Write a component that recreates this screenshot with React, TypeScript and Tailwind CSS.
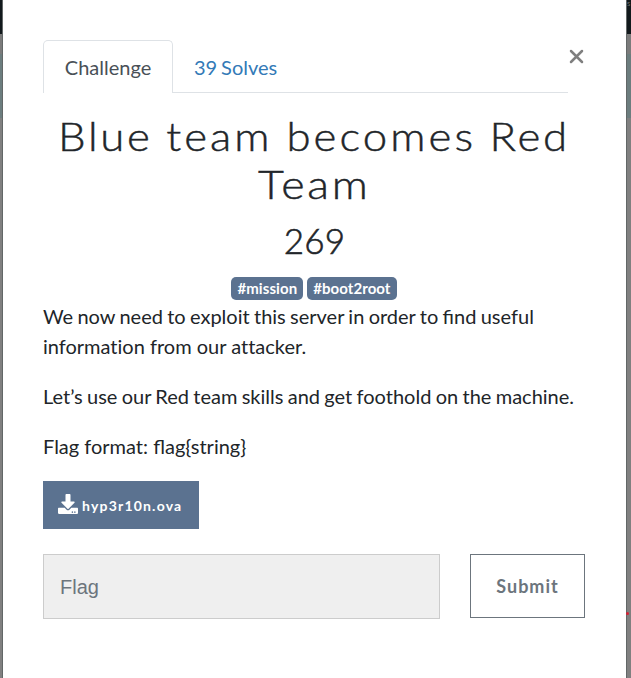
import React from "react";
import { FaDownload } from "react-icons/fa";

function Backdrop({ side }: { side: "left" | "right" }) {
  const right = side === "right";
  return (
    <div
      className={
        right
          ? "flex w-[5px] shrink-0 flex-col border-l border-[#626767]"
          : "flex w-[3px] shrink-0 flex-col border-r border-[#626767]"
      }
    >
      <div className="h-[34px] shrink-0 bg-[#12191c] text-[6px] leading-[7px] text-[#777777]">
        {right ? "S" : null}
      </div>
      <div className="h-5 shrink-0 bg-[#7b7b7b]" />
      <div className="h-16 shrink-0 bg-[#6c7d7e]" />
      <div className="flex-1 bg-[#808080]">
        {right && <div className="-ml-px mt-[494px] h-[3px] w-[3px] rounded-full bg-[#d91e34]" />}
      </div>
    </div>
  );
}

function Tag({ children }: { children: React.ReactNode }) {
  return (
    <span className="flex h-[23px] items-center rounded-[5px] bg-[#5b7290] px-1.5 text-[15px] font-bold leading-none tracking-[0.07px] text-white">
      {children}
    </span>
  );
}

export default function App() {
  return (
    <div className="flex h-[678px] w-[631px] overflow-hidden bg-white font-['Lato',sans-serif] text-[20px] leading-[30px] text-[#212529]">
      <Backdrop side="left" />
      <main className="flex w-[623px] shrink-0 flex-col pl-10 pr-[41px] pt-10">
        <header className="flex h-[53px]">
          <nav className="flex w-[525px] border-b border-[#dee2e6]">
            <button className="h-[53px] w-[130px] shrink-0 rounded-t-[5px] border border-b-0 border-[#dee2e6] bg-white text-[#495057]">
              Challenge
            </button>
            <button className="h-[53px] shrink-0 pl-[21px] text-[#337ab7] [word-spacing:-1.2px]">39 Solves</button>
          </nav>
          <button aria-label="Close" className="flex h-[33px] w-[17px] items-center justify-center">
            <svg width="15" height="15" viewBox="0 0 15 15" fill="none" stroke="#7f7f7f" strokeWidth="2.5" strokeLinecap="round">
              <path d="M2 2 13 13M13 2 2 13" />
            </svg>
          </button>
        </header>
        <h1 className="mt-[19px] flex flex-col items-center whitespace-nowrap text-[40px] font-light leading-[48px] [-webkit-text-stroke:0.45px_#212529]">
          <span className="scale-x-[1.094] tracking-[2.5px] [word-spacing:-1px]">
            Blue <span className="tracking-[2.8px]">team becomes</span> Red
          </span>
          <span className="scale-x-[1.12] tracking-[2.5px]">Team</span>
        </h1>
        <h2 className="mt-[11px] pl-px text-center text-[35px] font-light leading-[42px] tracking-[0.2px] [-webkit-text-stroke:0.6px_#212529]">269</h2>
        <div className="mt-4 flex justify-center gap-1">
          <Tag>#mission</Tag>
          <Tag>#boot2root</Tag>
        </div>
        <div className="mt-px flex flex-col gap-5 whitespace-nowrap">
          <p>
            <span className="[word-spacing:-0.8px]">We now need to exploit this server in order to find useful</span>
            <br />
            <span className="[font-variant-ligatures:none]">information from our attacker.</span>
          </p>
          <p className="[word-spacing:-0.8px]">Let’s use our Red team skills and get foothold on the machine.</p>
          <p>Flag format: flag{"{string}"}</p>
        </div>
        <button className="mt-5 flex h-12 w-[156px] items-center bg-[#5b7290] pl-[15px] text-[14px] font-bold leading-none tracking-[1.2px] text-white">
          <FaDownload className="mb-0.5 mr-1 h-5 w-5" />
          <span className="mt-0.5">hyp3r10n.ova</span>
        </button>
        <div className="mt-[25px] flex justify-between">
          <input
            placeholder="Flag"
            className="h-[65px] w-[397px] border border-[#cccccc] bg-[#efefef] px-4 pt-0.5 font-['Liberation_Sans',sans-serif] text-[20px] placeholder:text-[#6c757d]"
          />
          <button className="h-16 w-[115px] border border-[#6c757d] text-[18px] font-bold tracking-[1px] text-[#6c757d]">Submit</button>
        </div>
      </main>
      <Backdrop side="right" />
    </div>
  );
}
